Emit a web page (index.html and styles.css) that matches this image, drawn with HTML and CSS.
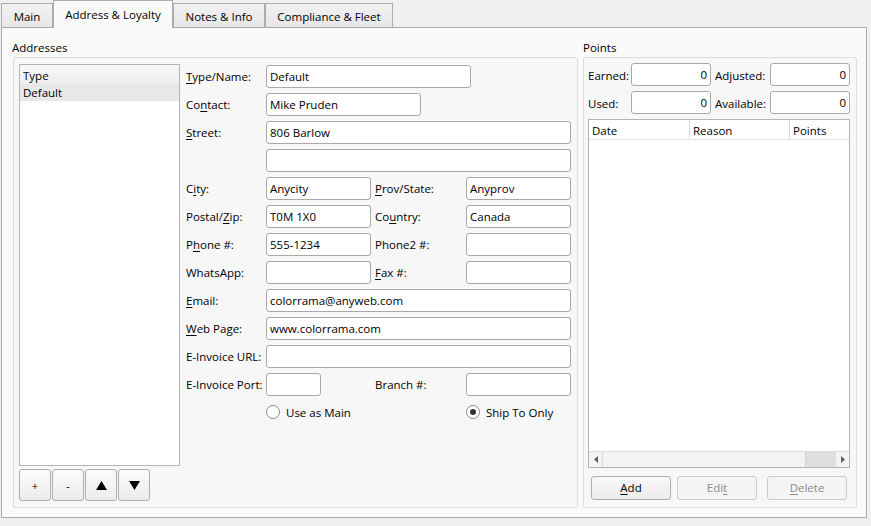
FILE: index.html
```html
<!DOCTYPE html>
<html lang="en">
<head>
    <meta charset="UTF-8">
    <title>Customer - Address &amp; Loyalty</title>
    <link rel="stylesheet" href="styles.css">
</head>
<body>
    <div class="tabs">
        <div class="tab tab-main">Main</div>
        <div class="tab tab-address active">Address &amp; Loyalty</div>
        <div class="tab tab-notes">Notes &amp; Info</div>
        <div class="tab tab-compliance">Compliance &amp; Fleet</div>
    </div>

    <div class="panel">
        <div class="group addresses">
            <div class="group-title">Addresses</div>
            <div class="group-box address-box">
                <div class="list-col">
                    <div class="list">
                        <div class="list-head">Type</div>
                        <div class="list-row selected">Default</div>
                    </div>
                    <div class="list-buttons">
                        <button class="small-btn">+</button>
                        <button class="small-btn">-</button>
                        <button class="small-btn">
                            <svg width="11" height="9" viewBox="0 0 11 9"><path d="M5.5 0 L11 9 L0 9 Z" fill="#000"/></svg>
                        </button>
                        <button class="small-btn">
                            <svg width="11" height="9" viewBox="0 0 11 9"><path d="M0 0 L11 0 L5.5 9 Z" fill="#000"/></svg>
                        </button>
                    </div>
                </div>

                <div class="form">
                    <label><u>T</u>ype/Name:</label>
                    <div class="field span-3"><input class="w-205" type="text" value="Default"></div>

                    <label>Co<u>n</u>tact:</label>
                    <div class="field span-3"><input class="w-155" type="text" value="Mike Pruden"></div>

                    <label><u>S</u>treet:</label>
                    <div class="field span-3"><input type="text" value="806 Barlow"></div>

                    <label></label>
                    <div class="field span-3"><input type="text" value=""></div>

                    <label>C<u>i</u>ty:</label>
                    <div class="field"><input type="text" value="Anycity"></div>
                    <label class="right"><u>P</u>rov/State:</label>
                    <div class="field"><input type="text" value="Anyprov"></div>

                    <label>Postal/<u>Z</u>ip:</label>
                    <div class="field"><input type="text" value="T0M 1X0"></div>
                    <label class="right">Co<u>u</u>ntry:</label>
                    <div class="field"><input type="text" value="Canada"></div>

                    <label>P<u>h</u>one #:</label>
                    <div class="field"><input type="text" value="555-1234"></div>
                    <label class="right">Phone2 #:</label>
                    <div class="field"><input type="text" value=""></div>

                    <label>WhatsApp:</label>
                    <div class="field"><input type="text" value=""></div>
                    <label class="right"><u>F</u>ax #:</label>
                    <div class="field"><input type="text" value=""></div>

                    <label><u>E</u>mail:</label>
                    <div class="field span-3"><input type="text" value="colorrama@anyweb.com"></div>

                    <label><u>W</u>eb Page:</label>
                    <div class="field span-3"><input type="text" value="www.colorrama.com"></div>

                    <label>E-Invoice URL:</label>
                    <div class="field span-3"><input type="text" value=""></div>

                    <label>E-Invoice Port:</label>
                    <div class="field"><input class="w-55" type="text" value=""></div>
                    <label class="right">Branch #:</label>
                    <div class="field"><input type="text" value=""></div>

                    <label></label>
                    <div class="radio"><span class="radio-dot"></span>Use as Main</div>
                    <label></label>
                    <div class="radio"><span class="radio-dot checked"></span>Ship To Only</div>
                </div>
            </div>
        </div>

        <div class="group points">
            <div class="group-title">Points</div>
            <div class="group-box points-box">
                <div class="totals">
                    <label>Earned:</label>
                    <input class="num" type="text" value="0">
                    <label class="right">Adjusted:</label>
                    <input class="num" type="text" value="0">
                    <label>Used:</label>
                    <input class="num" type="text" value="0">
                    <label class="right">Available:</label>
                    <input class="num" type="text" value="0">
                </div>

                <div class="grid">
                    <div class="grid-head">
                        <div class="col-date">Date</div>
                        <div class="col-reason">Reason</div>
                        <div class="col-points">Points</div>
                    </div>
                    <div class="grid-body"></div>
                    <div class="hscroll">
                        <div class="hs-btn">
                            <svg width="4" height="7" viewBox="0 0 4 7"><path d="M4 0 L0 3.5 L4 7 Z" fill="#606060"/></svg>
                        </div>
                        <div class="hs-track"><div class="hs-thumb"></div></div>
                        <div class="hs-btn">
                            <svg width="4" height="7" viewBox="0 0 4 7"><path d="M0 0 L4 3.5 L0 7 Z" fill="#606060"/></svg>
                        </div>
                    </div>
                </div>

                <div class="points-buttons">
                    <button class="btn btn-add"><u>A</u>dd</button>
                    <button class="btn btn-edit" disabled>Edi<u>t</u></button>
                    <button class="btn btn-delete" disabled><u>D</u>elete</button>
                </div>
            </div>
        </div>
    </div>
</body>
</html>
```

FILE: styles.css
```css
body {
    margin: 0;
    background-color: #f0f0f0;
    font-family: "Open Sans", "Noto Sans", sans-serif;
    font-size: 11.5px;
    color: #000;
}

u {
    text-decoration: underline;
    text-underline-offset: 2px;
}

/* tabs */

.tabs {
    display: flex;
    align-items: flex-end;
    height: 27px;
    padding-left: 1px;
}

.tab {
    box-sizing: border-box;
    height: 24px;
    border: 1px solid #acacac;
    border-bottom: none;
    background: linear-gradient(#f2f2f2, #e6e6e6);
    text-align: center;
    line-height: 25px;
}

.tab.active {
    position: relative;
    z-index: 1;
    height: 28px;
    margin-bottom: -1px;
    background: #fafafa;
    line-height: 27px;
}

.tab-main { width: 52px; }
.tab-address { width: 120px; }
.tab-notes { width: 92px; }
.tab-compliance { width: 128px; }

.panel {
    box-sizing: border-box;
    display: flex;
    gap: 5px;
    width: 866px;
    height: 491px;
    margin-left: 1px;
    padding: 0 9px 9px 11px;
    border: 1px solid #acacac;
    background-color: #fafafa;
}

/* group boxes */

.group {
    display: flex;
    flex-direction: column;
}

.addresses { width: 565px; }
.points { width: 274px; }

.group-title {
    box-sizing: border-box;
    height: 29px;
    padding-top: 12px;
    line-height: 16px;
}

.addresses .group-title { margin-left: -1px; }

.group-box {
    box-sizing: border-box;
    flex: 1;
    border: 1px solid #dcdcdc;
    border-radius: 2px;
    background-color: #f7f7f7;
}

.address-box {
    display: flex;
    padding: 6px 0 0 5px;
}

/* address list */

.list-col {
    display: flex;
    flex-direction: column;
    width: 161px;
}

.list {
    box-sizing: border-box;
    height: 402px;
    border: 1px solid #b4b4b4;
    background-color: white;
}

.list-head {
    height: 19px;
    padding-left: 3px;
    line-height: 21px;
    background: linear-gradient(#f7f7f7, #eeeeee);
}

.list-row {
    height: 17px;
    padding-left: 3px;
    line-height: 18px;
}

.list-row.selected {
    background-color: #e8e8e8;
}

.list-buttons {
    display: flex;
    gap: 1px;
    margin-top: 3px;
}

.small-btn {
    display: flex;
    align-items: center;
    justify-content: center;
    width: 32px;
    height: 32px;
    padding: 0;
    border: 1px solid #adadad;
    border-radius: 3px;
    background: linear-gradient(#fbfbfb, #ececec);
    font-family: inherit;
    font-size: 11px;
    color: #000;
}

/* address form */

.form {
    display: grid;
    grid-template-columns: 80px 105px 95px 105px;
    grid-auto-rows: 23px;
    row-gap: 5px;
    align-content: start;
    margin-left: 6px;
    padding-top: 1px;
}

.form label,
.totals label {
    display: flex;
    align-items: center;
    white-space: nowrap;
}

.form label.right,
.totals label.right {
    padding-left: 4px;
}

.field {
    display: flex;
}

.span-3 {
    grid-column: span 3;
}

input[type="text"] {
    box-sizing: border-box;
    width: 100%;
    height: 23px;
    margin: 0;
    padding: 0 3px;
    border: 1px solid #a9a9a9;
    border-radius: 3px;
    background-color: white;
    font-family: inherit;
    font-size: 11.5px;
    color: #000;
}

input.w-205 { width: 205px; }
input.w-155 { width: 155px; }
input.w-55 { width: 55px; }

.radio {
    display: flex;
    align-items: center;
    white-space: nowrap;
    margin-top: -1px;
}

.radio-dot {
    box-sizing: border-box;
    display: inline-flex;
    align-items: center;
    justify-content: center;
    width: 14px;
    height: 14px;
    margin-right: 6px;
    border: 1px solid #8c8c8c;
    border-radius: 50%;
    background-color: white;
}

.radio-dot.checked::after {
    content: "";
    width: 6px;
    height: 6px;
    border-radius: 50%;
    background-color: #333;
}

/* points */

.points-box {
    display: flex;
    flex-direction: column;
    padding: 5px 6px 0 4px;
}

.totals {
    display: grid;
    grid-template-columns: 43px 80px 59px 80px;
    grid-auto-rows: 23px;
    row-gap: 5px;
}

.totals label {
    padding-top: 1px;
}

input.num {
    text-align: right;
    padding-right: 3px;
}

.grid {
    box-sizing: border-box;
    display: flex;
    flex-direction: column;
    height: 349px;
    margin-top: 5px;
    border: 1px solid #b4b4b4;
    background-color: white;
}

.grid-head {
    display: flex;
    height: 19px;
    border-bottom: 1px solid #e0e0e0;
    line-height: 21px;
}

.grid-head div {
    box-sizing: border-box;
    padding-left: 3px;
    border-right: 1px solid #d9d9d9;
}

.col-date { width: 101px; }
.col-reason { width: 100px; }
.col-points { flex: 1; border-right: none !important; }

.grid-body {
    flex: 1;
}

.hscroll {
    display: flex;
    height: 15px;
    border-top: 1px solid #dcdcdc;
    background-color: #f3f3f3;
}

.hs-btn {
    display: flex;
    align-items: center;
    justify-content: center;
    width: 13px;
}

.hs-track {
    flex: 1;
    display: flex;
    justify-content: flex-end;
    border-left: 1px solid #dcdcdc;
}

.hs-thumb {
    width: 30px;
    background-color: #dedede;
    border-left: 1px solid #cfcfcf;
}

.points-buttons {
    display: flex;
    margin-top: 8px;
    padding-left: 3px;
}

.btn {
    width: 80px;
    height: 24px;
    padding: 0 0 1px;
    border: 1px solid #adadad;
    border-radius: 3px;
    background: linear-gradient(#f8f8f8, #ececec);
    font-family: inherit;
    font-size: 11.5px;
    color: #000;
}

.btn:disabled {
    border-color: #cccccc;
    background: #f4f4f4;
    color: #8a8a8a;
}

.btn-edit { margin-left: 6px; }
.btn-delete { margin-left: 10px; }
```
